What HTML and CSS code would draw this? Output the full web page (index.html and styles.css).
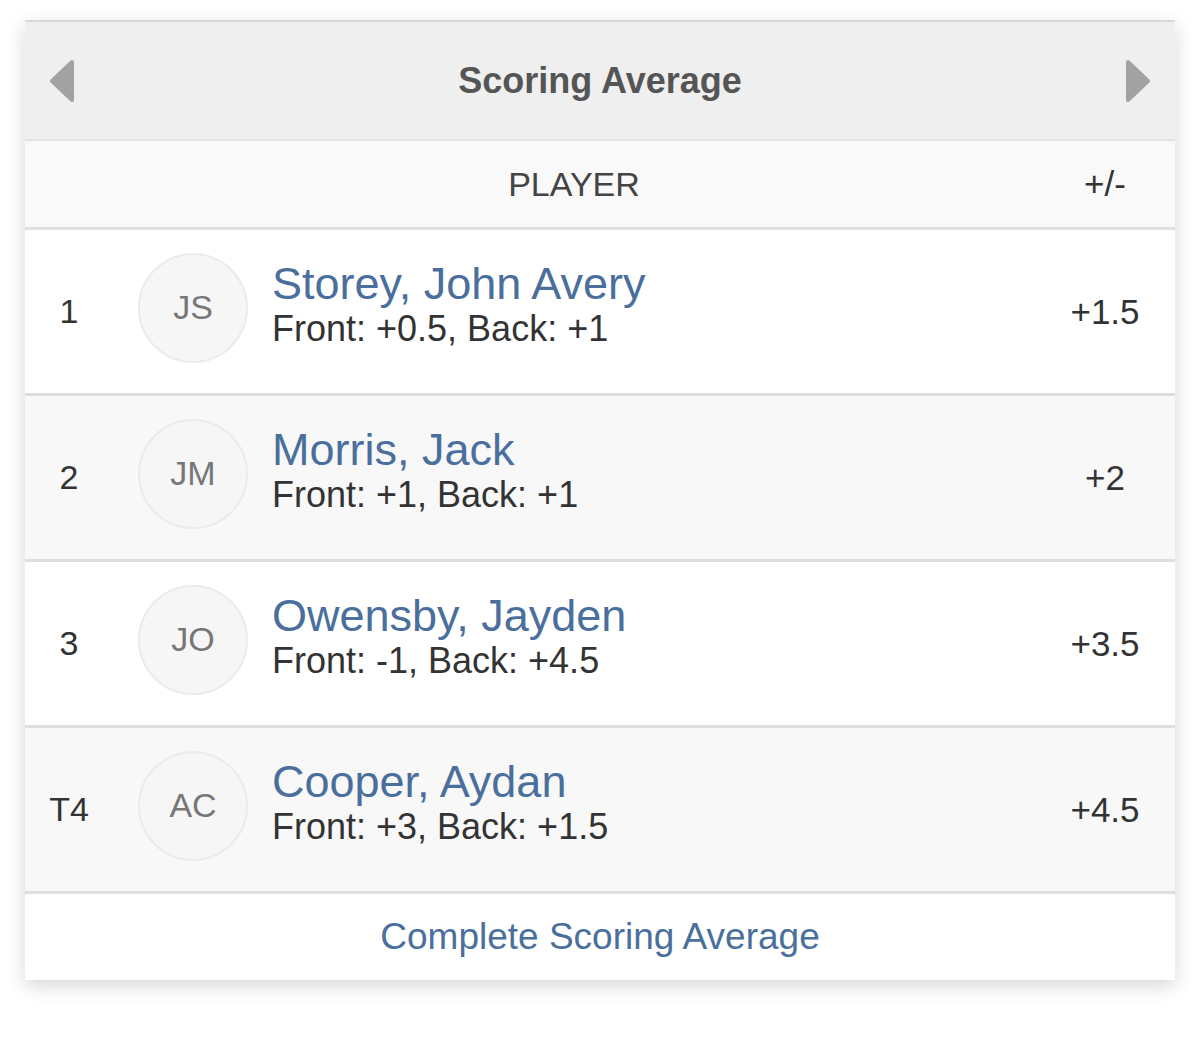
FILE: index.html
```html
<!DOCTYPE html>
<html lang="en">
<head>
<meta charset="utf-8">
<title>Scoring Average</title>
<link rel="stylesheet" href="styles.css">
</head>
<body>
<div class="card">
  <div class="card-header">
    <svg class="arrow" width="26" height="44" viewBox="0 0 26 44"><path d="M23 3 L3 22 L23 41 Z" fill="#a2a2a2" stroke="#a2a2a2" stroke-width="4" stroke-linejoin="round"/></svg>
    <h1 class="title">Scoring Average</h1>
    <svg class="arrow" width="26" height="44" viewBox="0 0 26 44"><path d="M3 3 L23 22 L3 41 Z" fill="#a2a2a2" stroke="#a2a2a2" stroke-width="4" stroke-linejoin="round"/></svg>
  </div>
  <div class="row colhead">
    <div class="rank"></div>
    <div class="player-head">PLAYER</div>
    <div class="value">+/-</div>
  </div>
  <div class="row entry">
    <div class="rank">1</div>
    <div class="player">
      <div class="avatar">JS</div>
      <div class="info">
        <div class="name">Storey, John Avery</div>
        <div class="detail">Front: +0.5, Back: +1</div>
      </div>
    </div>
    <div class="value">+1.5</div>
  </div>
  <div class="row entry alt">
    <div class="rank">2</div>
    <div class="player">
      <div class="avatar">JM</div>
      <div class="info">
        <div class="name">Morris, Jack</div>
        <div class="detail">Front: +1, Back: +1</div>
      </div>
    </div>
    <div class="value">+2</div>
  </div>
  <div class="row entry">
    <div class="rank">3</div>
    <div class="player">
      <div class="avatar">JO</div>
      <div class="info">
        <div class="name">Owensby, Jayden</div>
        <div class="detail">Front: -1, Back: +4.5</div>
      </div>
    </div>
    <div class="value">+3.5</div>
  </div>
  <div class="row entry alt">
    <div class="rank">T4</div>
    <div class="player">
      <div class="avatar">AC</div>
      <div class="info">
        <div class="name">Cooper, Aydan</div>
        <div class="detail">Front: +3, Back: +1.5</div>
      </div>
    </div>
    <div class="value">+4.5</div>
  </div>
  <div class="footer"><a class="more" href="#">Complete Scoring Average</a></div>
</div>
</body>
</html>
```
FILE: styles.css
```css
html, body {
  margin: 0;
  padding: 0;
  background: #ffffff;
}
body {
  font-family: "Liberation Sans", Arial, Helvetica, sans-serif;
  color: #333333;
  padding: 20px 25px 59px 25px;
}
.card {
  width: 1150px;
  background: #ffffff;
  border-top: 2px solid #d9d9d9;
  box-shadow: 0 6px 18px rgba(0, 0, 0, 0.16);
}
.card-header {
  height: 117px;
  background: #efefef;
  border-bottom: 2px solid #e3e3e3;
  display: flex;
  align-items: center;
  justify-content: space-between;
  padding: 0 24px 0 24px;
}
.arrow {
  display: block;
}
.title {
  margin: 0;
  font-size: 36px;
  font-weight: bold;
  color: #555555;
}
.row {
  display: grid;
  grid-template-columns: 88px 1fr 140px;
  align-items: center;
}
.colhead {
  height: 86px;
  background: #f9f9f9;
  font-size: 34px;
  color: #444444;
}
.player-head {
  text-align: center;
}
.entry {
  height: 163px;
  border-top: 3px solid #dedede;
  background: #ffffff;
}
.entry.alt {
  background: #f8f8f8;
}
.rank {
  text-align: center;
  font-size: 34px;
  color: #333333;
}
.value {
  text-align: center;
  font-size: 35px;
  color: #333333;
}
.player {
  display: flex;
  align-items: center;
  padding-left: 25px;
  gap: 24px;
}
.avatar {
  width: 106px;
  height: 106px;
  border-radius: 50%;
  border: 2px solid #ebebeb;
  background: #f6f6f6;
  display: flex;
  align-items: center;
  justify-content: center;
  font-size: 34px;
  color: #777777;
  flex: none;
  margin-top: -8px;
}
.info {
  display: flex;
  flex-direction: column;
  margin-top: -10px;
}
.name {
  font-size: 45px;
  line-height: 44px;
  color: #4a6f9c;
}
.detail {
  font-size: 36px;
  line-height: 46px;
  color: #333333;
}
.footer {
  height: 86px;
  border-top: 3px solid #dedede;
  display: flex;
  align-items: center;
  justify-content: center;
}
.more {
  font-size: 37px;
  color: #4a6f9c;
  text-decoration: none;
}
```
